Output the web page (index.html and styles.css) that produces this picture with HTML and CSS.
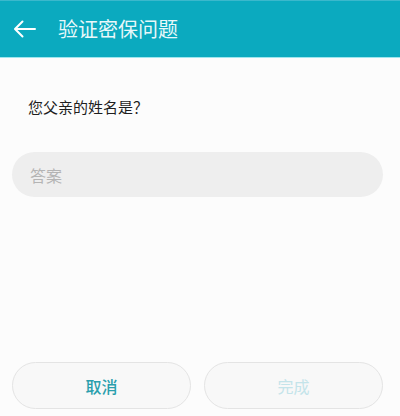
FILE: index.html
```html
<!DOCTYPE html>
<html lang="zh-CN">
<head>
    <meta charset="UTF-8">
    <meta name="viewport" content="width=device-width, initial-scale=1.0">
    <title>验证密保问题</title>
    <link rel="stylesheet" href="styles.css">
</head>
<body>
    <div class="page">
        <header class="topbar">
            <button class="back" aria-label="返回">
                <svg width="24" height="18" viewBox="0 0 24 18" fill="none" stroke="#fff" stroke-width="2" stroke-linecap="round" stroke-linejoin="round">
                    <path d="M22 9H2.5M9.5 1.5L2 9l7.5 7.5"/>
                </svg>
            </button>
            <h1 class="title">验证密保问题</h1>
        </header>
        <main class="body">
            <p class="question">您父亲的姓名是？</p>
            <input class="answer" type="text" placeholder="答案">
        </main>
        <footer class="actions">
            <button class="btn btn-cancel">取消</button>
            <button class="btn btn-done" disabled>完成</button>
        </footer>
    </div>
</body>
</html>
```

FILE: styles.css
```css
body {
    margin: 0;
    background: #fcfcfc;
    font-family: "Noto Sans CJK SC", "Noto Sans", sans-serif;
}
.page {
    display: flex;
    flex-direction: column;
    height: 416px;
}
.topbar {
    display: flex;
    align-items: center;
    height: 58px;
    background: #0baabf;
    border-top: 1px solid #3bb8cc;
    border-bottom: 1px solid #9fe6ee;
    box-sizing: border-box;
}
.back {
    display: flex;
    align-items: center;
    justify-content: center;
    width: 24px;
    height: 24px;
    margin-left: 13px;
    padding: 0;
    border: none;
    background: none;
}
.title {
    margin: 0 0 1px 21px;
    font-size: 20px;
    font-weight: 400;
    color: #e8f8fa;
}
.body {
    flex: 1;
    display: flex;
    flex-direction: column;
    padding: 0 17px 0 12px;
}
.question {
    margin: 37px 0 0 16px;
    font-size: 15px;
    color: #1e1e1e;
    line-height: 24px;
}
.answer {
    margin-top: 33px;
    height: 45px;
    padding: 0 18px;
    border: none;
    border-radius: 23px;
    background: #eeeeee;
    font-family: inherit;
    font-size: 16px;
    color: #333;
    outline: none;
}
.answer::placeholder {
    color: #b4b4b4;
}
.actions {
    display: flex;
    gap: 13px;
    padding: 0 17px 7px 12px;
}
.btn {
    flex: 1;
    height: 47px;
    border: 1px solid #e4e4e4;
    border-radius: 24px;
    background: #f8f8f8;
    font-family: inherit;
    font-size: 16px;
}
.btn-cancel {
    color: #2a9fad;
    font-weight: 500;
}
.btn-done {
    color: #c4e4ea;
}
```
